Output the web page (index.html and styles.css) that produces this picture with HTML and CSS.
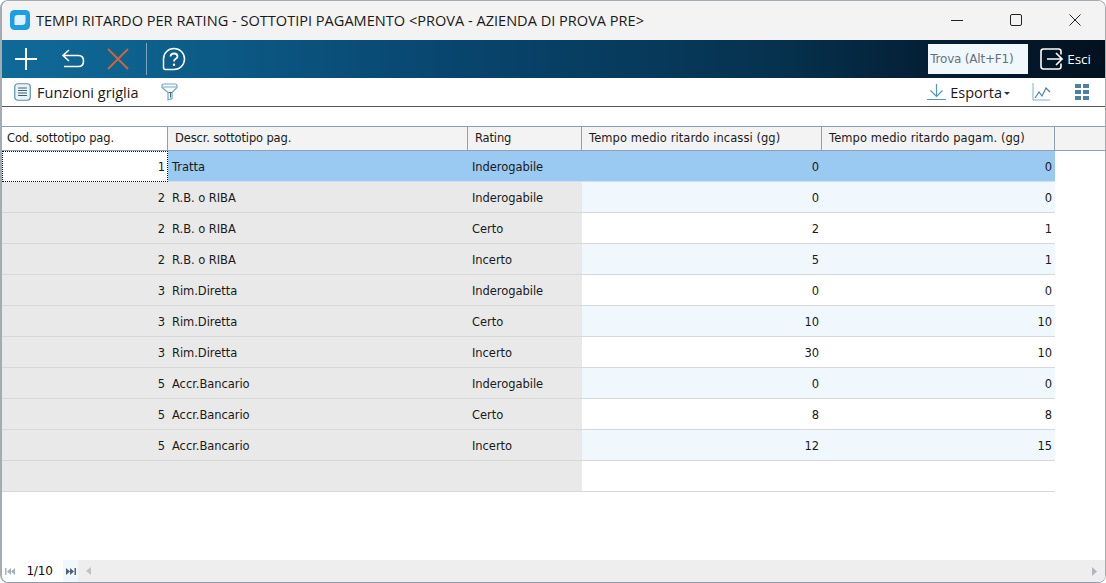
FILE: index.html
```html
<!DOCTYPE html>
<html lang="it">
<head>
<meta charset="utf-8">
<title>Tempi ritardo per rating</title>
<link rel="stylesheet" href="styles.css">
</head>
<body>
<div class="window">
  <header class="titlebar">
    <svg class="app-icon" width="20" height="20" viewBox="0 0 20 20"><rect x="0" y="0" width="20" height="20" rx="4.500" fill="#1b9ee4"/><path d="M7.500 5H15.500V11.500Q15.500 15 12 15H4.500V8Q4.500 5 7.500 5Z" fill="#dff1fb"/></svg>
    <span class="title">TEMPI RITARDO PER RATING - SOTTOTIPI PAGAMENTO &lt;PROVA - AZIENDA DI PROVA PRE&gt;</span>
    <div class="win-controls">
      <svg width="12" height="12" viewBox="0 0 12 12"><path d="M0 6.500H12" stroke="#222" fill="none"/></svg>
      <svg width="12" height="12" viewBox="0 0 12 12"><rect x="0.500" y="0.500" width="11" height="11" rx="1.500" stroke="#222" fill="none"/></svg>
      <svg width="12" height="12" viewBox="0 0 12 12"><path d="M0.500 0.500L11.500 11.500M11.500 0.500L0.500 11.500" stroke="#222" fill="none"/></svg>
    </div>
  </header>
  <div class="toolbar">
    <button class="tool tool-add"><svg width="24" height="24" viewBox="0 0 24 24"><path d="M12 1V23M1 12H23" stroke="#fff" stroke-width="2" fill="none"/></svg></button>
    <button class="tool tool-undo"><svg width="24" height="22" viewBox="0 0 24 22"><path d="M8 2L2 7.500L8 13M2 7.500H17.500Q22.500 7.500 22.500 13Q22.500 18.500 17.500 18.500H3" stroke="#fff" stroke-width="1.600" fill="none"/></svg></button>
    <button class="tool tool-del"><svg width="22" height="22" viewBox="0 0 22 22"><path d="M1 1L21 21M21 1L1 21" stroke="#c8673a" stroke-width="2" fill="none"/></svg></button>
    <span class="sep"></span>
    <button class="tool tool-help"><svg width="24" height="24" viewBox="0 0 24 24"><path d="M12 1.500A10.500 10.500 0 1 1 12 22.500H3.500Q1.500 22.500 1.500 20.500V12A10.500 10.500 0 0 1 12 1.500Z" stroke="#fff" stroke-width="1.500" fill="none"/><path d="M8.500 9.500Q8.700 6.500 12 6.500Q15.500 6.500 15.500 9.500Q15.500 11 13.500 12Q12 12.800 12 14.500" stroke="#fff" stroke-width="1.800" fill="none"/><circle cx="12" cy="17.700" r="1.200" fill="#fff"/></svg></button>
    <div class="spacer"></div>
    <div class="search">Trova (Alt+F1)</div>
    <button class="exit"><svg width="23" height="22" viewBox="0 0 23 22"><path d="M21 6.500V3.500Q21 1 18.500 1H3.500Q1 1 1 3.500V18.500Q1 21 3.500 21H18.500Q21 21 21 18.500V15.500" stroke="#fff" stroke-width="1.600" fill="none"/><path d="M7 11H22M16 5L22 11L16 17" stroke="#fff" stroke-width="1.600" fill="none"/></svg><span>Esci</span></button>
  </div>
  <div class="subbar">
    <svg class="ico-list" width="17" height="18" viewBox="0 0 17 18"><rect x="0.750" y="0.750" width="15.500" height="16.500" rx="3" fill="#eaf3f9" stroke="#5c90ad" stroke-width="1.200"/><path d="M4 5H13M4 7.500H13M4 10H13M4 12.500H13" stroke="#40606f" fill="none"/></svg>
    <span class="sub-label">Funzioni griglia</span>
    <svg class="ico-filter" width="17" height="18" viewBox="0 0 17 18"><path d="M3 1H14Q16 1 16 3V4.500L11 9.500V15.500L7 17V9.500L1 4.500V3Q1 1 3 1Z" fill="#fff" stroke="#6aa8c9" stroke-width="1.200"/><path d="M2 4H15" stroke="#6aa8c9" fill="none"/><path d="M7.500 9.500H11M9.500 9.500V14.500" stroke="#4c6a78" fill="none"/></svg>
    <div class="spacer"></div>
    <svg class="ico-down" width="19" height="16" viewBox="0 0 19 16"><path d="M9.500 0V12M3.500 6.500L9.500 12.500L15.500 6.500M0 15.500H19" stroke="#4f97c4" stroke-width="1.200" fill="none"/></svg>
    <span class="sub-label">Esporta</span><span class="caret"></span>
    <svg class="ico-chart" width="19" height="18" viewBox="0 0 19 18"><path d="M1 0V17H18" stroke="#7fb0cc" fill="none"/><path d="M3 15L7 9L10 13L14 5L18 9" stroke="#3e7ea3" stroke-width="1.100" fill="none"/></svg>
    <svg class="ico-grid" width="14" height="16" viewBox="0 0 14 16"><path d="M0 0H6V4H0ZM8 0H14V4H8ZM0 6H6V10H0ZM8 6H14V10H8ZM0 12H6V16H0ZM8 12H14V16H8Z" fill="#4d829f"/></svg>
  </div>
  <main class="content">
    <div class="grid">
      <div class="cell head head-first">Cod. sottotipo pag.</div>
      <div class="cell head">Descr. sottotipo pag.</div>
      <div class="cell head">Rating</div>
      <div class="cell head head-wide">Tempo medio ritardo incassi (gg)</div>
      <div class="cell head head-wide">Tempo medio ritardo pagam. (gg)</div>
      <div class="cell head head-end"></div>

      <div class="cell num focus">1</div><div class="cell txt sel">Tratta</div><div class="cell txt sel">Inderogabile</div><div class="cell num sel">0</div><div class="cell num sel">0</div><div class="cell blank"></div>

      <div class="cell num ro">2</div><div class="cell txt ro">R.B. o RIBA</div><div class="cell txt ro">Inderogabile</div><div class="cell num alt">0</div><div class="cell num alt">0</div><div class="cell blank"></div>
      <div class="cell num ro">2</div><div class="cell txt ro">R.B. o RIBA</div><div class="cell txt ro">Certo</div><div class="cell num">2</div><div class="cell num">1</div><div class="cell blank"></div>
      <div class="cell num ro">2</div><div class="cell txt ro">R.B. o RIBA</div><div class="cell txt ro">Incerto</div><div class="cell num alt">5</div><div class="cell num alt">1</div><div class="cell blank"></div>
      <div class="cell num ro">3</div><div class="cell txt ro">Rim.Diretta</div><div class="cell txt ro">Inderogabile</div><div class="cell num">0</div><div class="cell num">0</div><div class="cell blank"></div>
      <div class="cell num ro">3</div><div class="cell txt ro">Rim.Diretta</div><div class="cell txt ro">Certo</div><div class="cell num alt">10</div><div class="cell num alt">10</div><div class="cell blank"></div>
      <div class="cell num ro">3</div><div class="cell txt ro">Rim.Diretta</div><div class="cell txt ro">Incerto</div><div class="cell num">30</div><div class="cell num">10</div><div class="cell blank"></div>
      <div class="cell num ro">5</div><div class="cell txt ro">Accr.Bancario</div><div class="cell txt ro">Inderogabile</div><div class="cell num alt">0</div><div class="cell num alt">0</div><div class="cell blank"></div>
      <div class="cell num ro">5</div><div class="cell txt ro">Accr.Bancario</div><div class="cell txt ro">Certo</div><div class="cell num">8</div><div class="cell num">8</div><div class="cell blank"></div>
      <div class="cell num ro">5</div><div class="cell txt ro">Accr.Bancario</div><div class="cell txt ro">Incerto</div><div class="cell num alt">12</div><div class="cell num alt">15</div><div class="cell blank"></div>
      <div class="cell num ro"></div><div class="cell txt ro"></div><div class="cell txt ro"></div><div class="cell num"></div><div class="cell num"></div><div class="cell blank"></div>
    </div>
  </main>
  <footer class="statusbar">
    <svg class="nav nav-first" width="10" height="7" viewBox="0 0 10 7"><path d="M0 0H1.500V7H0ZM6 0V7L2 3.500ZM10 0V7L6 3.500Z" fill="#a9b2ba"/></svg>
    <span class="pager">1/10</span>
    <span class="nav-next"><svg width="10" height="7" viewBox="0 0 10 7"><path d="M0 0V7L4 3.500ZM4 0V7L8 3.500ZM8.500 0H10V7H8.500Z" fill="#4d6078"/></svg></span>
    <div class="hscroll">
      <svg width="5" height="8" viewBox="0 0 5 8"><path d="M5 0V8L0 4Z" fill="#bcc3c9"/></svg>
      <svg width="5" height="9" viewBox="0 0 5 9"><path d="M0 0V9L5 4.500Z" fill="#aeb6c2"/></svg>
    </div>
  </footer>
</div>
</body>
</html>
```
FILE: styles.css
```css
* { box-sizing: border-box; }
html, body { margin: 0; height: 100%; background: #fff; overflow: hidden; }
.window {
  width: 1106px; height: 583px;
  display: flex; flex-direction: column;
  border: 1px solid #a3abb3; border-left-width: 2px; border-bottom-color: #8e9aa6;
  border-radius: 8px; overflow: hidden;
  background: #fff;
  font-family: "DejaVu Sans", sans-serif;
  color: #111;
}
button { border: 0; background: none; padding: 0; margin: 0; display: flex; align-items: center; color: inherit; font: inherit; }
.spacer { flex: 1; }

.titlebar {
  height: 39px; flex: none;
  display: flex; align-items: center;
  background: #f3f3f3;
  padding: 0 0 2px 8px;
}
.app-icon { flex: none; }
.title {
  margin-left: 6px;
  font: 14.57px "Open Sans", sans-serif;
  color: #1a1a1a;
  white-space: nowrap;
}
.win-controls { margin-left: auto; display: flex; gap: 47px; padding-right: 24px; align-items: center; }
.win-controls svg { display: block; }

.toolbar {
  height: 38px; flex: none;
  display: flex; align-items: center;
  background: linear-gradient(90deg, #0f6a98 0%, #0d618e 12%, #08466f 40%, #06324f 70%, #041a2e 88%, #03111f 100%);
  padding-left: 12px;
}
.tool svg { display: block; }
.tool-undo { margin-left: 23px; }
.tool-del { margin-left: 22px; }
.sep { width: 1px; height: 32px; margin-left: 17px; background: #7fa3b8; }
.tool-help { margin-left: 15px; }
.search {
  width: 100px; height: 30px; flex: none;
  background: #f1f8fd;
  color: #66717b;
  font: 12px/30px "DejaVu Sans", sans-serif;
  padding-left: 2px;
  white-space: nowrap;
  overflow: hidden;
  letter-spacing: -0.2px;
}
.exit { margin-left: 12px; margin-right: 14px; color: #fff; font: 13.5px "Open Sans", sans-serif; gap: 4px; }
.exit svg { display: block; }

.subbar {
  height: 29px; flex: none;
  display: flex; align-items: center;
  background: #fff;
  border-bottom: 1px solid #555;
  padding-left: 12px;
  font: 14.5px "Open Sans", sans-serif;
  color: #1a1a1a;
}
.sub-label { white-space: nowrap; }
.ico-list { margin-right: 6px; flex: none; }
.ico-filter { margin-left: 23px; flex: none; }
.ico-down { margin-right: 4px; flex: none; }
.caret { width: 0; height: 0; margin-left: 2px; margin-top: 2px; border: 3px solid transparent; border-top-color: #333; border-bottom: 0; }
.ico-chart { margin-left: 22px; flex: none; }
.ico-grid { margin-left: 24px; margin-right: 16px; flex: none; }

.content { flex: 1; padding-top: 19px; min-height: 0; background: #fff; }
.grid {
  display: grid;
  grid-template-columns: 166px 300px 114px 240px 233px 50px;
  grid-template-rows: 25px repeat(11, 31px);
  font: 11.5px "DejaVu Sans", sans-serif;
  letter-spacing: -0.05px;
  color: #1a1a1a;
}
.cell {
  display: flex; align-items: center;
  border-bottom: 1px solid #d8d8d8;
  padding-top: 1px;
  white-space: nowrap;
  overflow: hidden;
}
.head {
  background: #f3f3f3;
  border-top: 1px solid #90a0b0;
  border-bottom: 1px solid #90a0b0;
  border-right: 1px solid #90a0b0;
  padding: 0 0 2px 7px;
  letter-spacing: -0.15px;
}
.head-wide { letter-spacing: 0.07px; }
.head-first { background: #fff; padding-left: 5px; }
.head-end { border-right: 0; }
.txt { padding-left: 4px; }
.num { justify-content: flex-end; padding-right: 3px; background: #fff; }
.ro { background: #e9e9e9; }
.alt { background: #f0f8fd; }
.sel { background: #9ac9f2; border-bottom-color: #cfe2f3; }
.focus { background: #fff; border: 1px dotted #111; padding-right: 2px; }
.blank { background: #fff; border-bottom: 0; }

.statusbar {
  height: 22px; flex: none;
  display: flex; align-items: center;
  background: #fff;
  padding-left: 3px;
}
.pager { width: 48px; padding-left: 1px; text-align: center; font: 12px "DejaVu Sans", sans-serif; letter-spacing: -0.2px; flex: none; }
.nav-next { width: 15px; height: 100%; flex: none; background: #f0f8fd; display: flex; align-items: center; justify-content: center; }
.hscroll { flex: 1; height: 100%; background: #eeeeee; display: flex; align-items: center; justify-content: space-between; padding: 0 8px 0 8px; }
```
